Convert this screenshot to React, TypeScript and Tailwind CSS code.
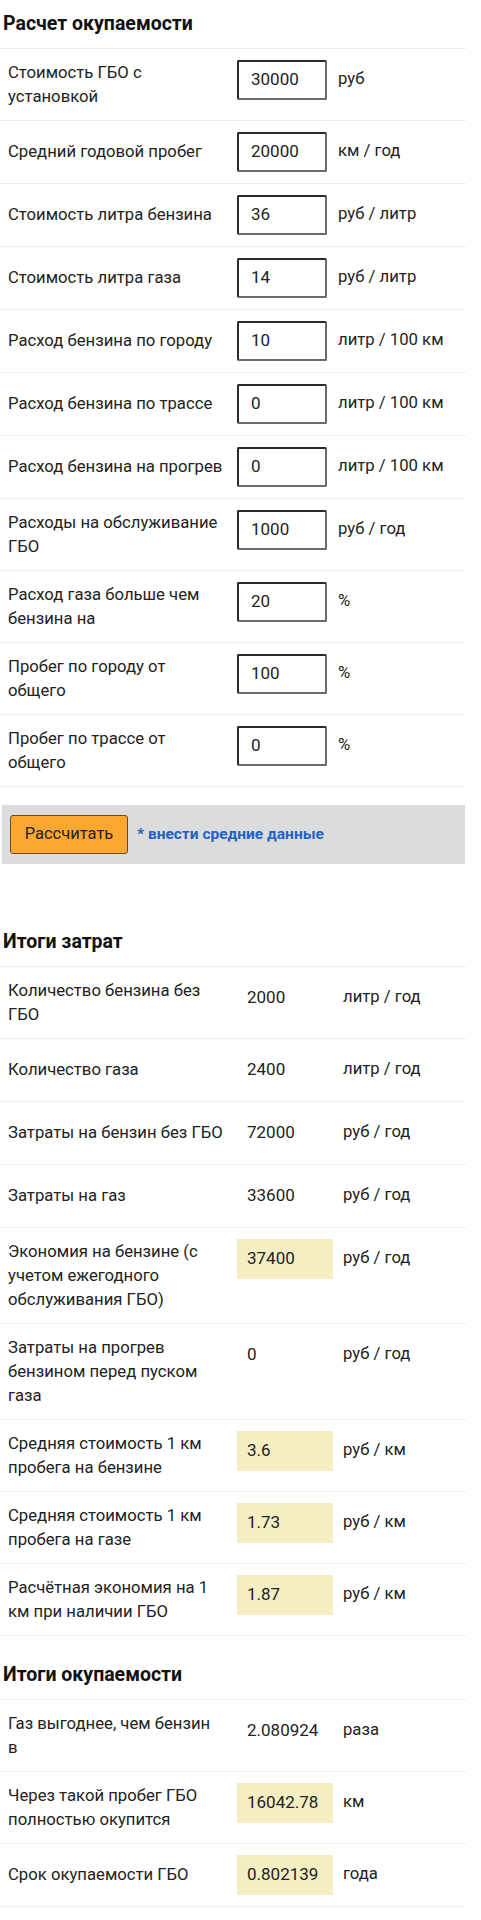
type Row = { label: string[]; value: string; unit: string; hl?: boolean };

const inputs: Row[] = [
  { label: ['Стоимость ГБО с', 'установкой'], value: '30000', unit: 'руб' },
  { label: ['Средний годовой пробег'], value: '20000', unit: 'км / год' },
  { label: ['Стоимость литра бензина'], value: '36', unit: 'руб / литр' },
  { label: ['Стоимость литра газа'], value: '14', unit: 'руб / литр' },
  { label: ['Расход бензина по городу'], value: '10', unit: 'литр / 100 км' },
  { label: ['Расход бензина по трассе'], value: '0', unit: 'литр / 100 км' },
  { label: ['Расход бензина на прогрев'], value: '0', unit: 'литр / 100 км' },
  { label: ['Расходы на обслуживание', 'ГБО'], value: '1000', unit: 'руб / год' },
  { label: ['Расход газа больше чем', 'бензина на'], value: '20', unit: '%' },
  { label: ['Пробег по городу от', 'общего'], value: '100', unit: '%' },
  { label: ['Пробег по трассе от', 'общего'], value: '0', unit: '%' },
];

const costs: Row[] = [
  { label: ['Количество бензина без', 'ГБО'], value: '2000', unit: 'литр / год' },
  { label: ['Количество газа'], value: '2400', unit: 'литр / год' },
  { label: ['Затраты на бензин без ГБО'], value: '72000', unit: 'руб / год' },
  { label: ['Затраты на газ'], value: '33600', unit: 'руб / год' },
  { label: ['Экономия на бензине (с', 'учетом ежегодного', 'обслуживания ГБО)'], value: '37400', unit: 'руб / год', hl: true },
  { label: ['Затраты на прогрев', 'бензином перед пуском', 'газа'], value: '0', unit: 'руб / год' },
  { label: ['Средняя стоимость 1 км', 'пробега на бензине'], value: '3.6', unit: 'руб / км', hl: true },
  { label: ['Средняя стоимость 1 км', 'пробега на газе'], value: '1.73', unit: 'руб / км', hl: true },
  { label: ['Расчётная экономия на 1', 'км при наличии ГБО'], value: '1.87', unit: 'руб / км', hl: true },
];

const payback: Row[] = [
  { label: ['Газ выгоднее, чем бензин', 'в'], value: '2.080924', unit: 'раза' },
  { label: ['Через такой пробег ГБО', 'полностью окупится'], value: '16042.78', unit: 'км', hl: true },
  { label: ['Срок окупаемости ГБО'], value: '0.802139', unit: 'года', hl: true },
];

function Heading({ children, className = '' }: { children: string; className?: string }) {
  return (
    <h3 className={`border-b border-[#ededed] pl-[3px] py-3 text-[19.5px] leading-[24px] font-bold text-[#111] ${className}`}>
      {children}
    </h3>
  );
}

function Label({ lines }: { lines: string[] }) {
  return (
    <div className="w-[237px] shrink-0 flex flex-col justify-center pl-2 pr-1 py-[11.5px] text-[16.7px] leading-6 whitespace-nowrap">
      {lines.map((l) => (
        <span key={l}>{l}</span>
      ))}
    </div>
  );
}

function InputLine({ r }: { r: Row }) {
  return (
    <div className="flex border-b border-[#ededed]">
      <Label lines={r.label} />
      <div className="w-[101px] shrink-0 py-[11px]">
        <div className="w-[90px] h-10 border-2 border-t-[#2a2a2a] border-l-[#2a2a2a] border-b-[#6a6a6a] border-r-[#6a6a6a] rounded-[2px] px-3 flex items-center text-[17px]">
          {r.value}
        </div>
      </div>
      <div className="pt-[18px] text-[16.7px] leading-6">{r.unit}</div>
    </div>
  );
}

function OutLine({ r }: { r: Row }) {
  return (
    <div className="flex border-b border-[#ededed]">
      <Label lines={r.label} />
      <div className="w-[106px] shrink-0 py-[11px]">
        <div className={`w-[96px] h-10 px-[10px] flex items-center text-[17px] ${r.hl ? 'bg-[#f5eec3]' : ''}`}>
          {r.value}
        </div>
      </div>
      <div className="pt-[18px] text-[16.7px] leading-6">{r.unit}</div>
    </div>
  );
}

export default function App() {
  return (
    <div className="w-[466px] bg-white text-[#222]" style={{ fontFamily: 'Roboto, "Noto Sans", sans-serif' }}>
      <Heading>Расчет окупаемости</Heading>
      {inputs.map((r) => (
        <InputLine key={r.label[0]} r={r} />
      ))}

      <div className="mt-[18px] ml-[2px] w-[463px] bg-[#dcdcdc] py-[10px] pl-2 flex items-center gap-[9px]">
        <button className="h-[39px] w-[118px] bg-[#fda733] border border-[#6b4a1e] rounded-[3px] text-[16.5px] text-[#222]">
          Рассчитать
        </button>
        <span className="text-[15.5px] font-bold text-[#1e63c8]">* внести средние данные</span>
      </div>

      <Heading className="mt-[54px]">Итоги затрат</Heading>
      {costs.map((r) => (
        <OutLine key={r.label[0] + r.value} r={r} />
      ))}

      <Heading className="mt-[15px]">Итоги окупаемости</Heading>
      {payback.map((r) => (
        <OutLine key={r.label[0]} r={r} />
      ))}
    </div>
  );
}
